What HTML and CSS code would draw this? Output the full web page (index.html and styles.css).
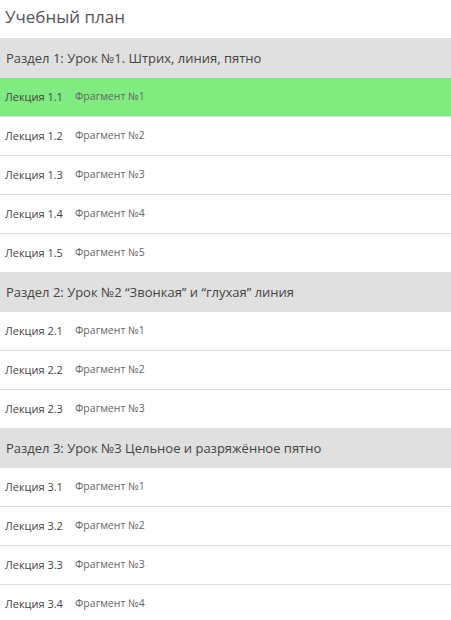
FILE: index.html
```html
<!DOCTYPE html>
<html lang="ru">
<head>
    <meta charset="UTF-8">
    <title>Учебный план</title>
    <link rel="stylesheet" href="styles.css">
</head>
<body>
    <div class="plan">
        <h2 class="plan-title">Учебный план</h2>

        <div class="section-head">Раздел 1: Урок №1. Штрих, линия, пятно</div>
        <ul class="lessons">
            <li class="lesson active"><span class="lesson-name">Лекция 1.1</span><span class="lesson-part">Фрагмент №1</span></li>
            <li class="lesson"><span class="lesson-name">Лекция 1.2</span><span class="lesson-part">Фрагмент №2</span></li>
            <li class="lesson"><span class="lesson-name">Лекция 1.3</span><span class="lesson-part">Фрагмент №3</span></li>
            <li class="lesson"><span class="lesson-name">Лекция 1.4</span><span class="lesson-part">Фрагмент №4</span></li>
            <li class="lesson"><span class="lesson-name">Лекция 1.5</span><span class="lesson-part">Фрагмент №5</span></li>
        </ul>

        <div class="section-head">Раздел 2: Урок №2 “Звонкая” и “глухая” линия</div>
        <ul class="lessons">
            <li class="lesson"><span class="lesson-name">Лекция 2.1</span><span class="lesson-part">Фрагмент №1</span></li>
            <li class="lesson"><span class="lesson-name">Лекция 2.2</span><span class="lesson-part">Фрагмент №2</span></li>
            <li class="lesson"><span class="lesson-name">Лекция 2.3</span><span class="lesson-part">Фрагмент №3</span></li>
        </ul>

        <div class="section-head">Раздел 3: Урок №3 Цельное и разряжённое пятно</div>
        <ul class="lessons">
            <li class="lesson"><span class="lesson-name">Лекция 3.1</span><span class="lesson-part">Фрагмент №1</span></li>
            <li class="lesson"><span class="lesson-name">Лекция 3.2</span><span class="lesson-part">Фрагмент №2</span></li>
            <li class="lesson"><span class="lesson-name">Лекция 3.3</span><span class="lesson-part">Фрагмент №3</span></li>
            <li class="lesson"><span class="lesson-name">Лекция 3.4</span><span class="lesson-part">Фрагмент №4</span></li>
        </ul>
    </div>
</body>
</html>
```

FILE: styles.css
```css
body {
    margin: 0;
    padding: 0;
    background: #fff;
    font-family: "Open Sans", Arial, sans-serif;
    color: #333;
}

.plan {
    width: 451px;
}

.plan-title {
    margin: 0;
    height: 38px;
    padding: 5px 0 0 5px;
    box-sizing: border-box;
    font-size: 17px;
    font-weight: normal;
    color: #555;
}

.section-head {
    height: 40px;
    display: flex;
    align-items: center;
    padding-left: 6px;
    background: #e0e0e0;
    font-size: 13px;
    color: #444;
}

.lessons {
    list-style: none;
    margin: 0;
    padding: 0;
}

.lesson {
    height: 38px;
    box-sizing: content-box;
    display: flex;
    align-items: center;
    padding: 0 0 0 5px;
    border-bottom: 1px solid #ddd;
}

.lesson:last-child {
    border-bottom: none;
}

.lesson.active {
    background: #80eb80;
}

.lesson-name {
    width: 70px;
    font-size: 11px;
    color: #444;
    margin-top: -2px;
}

.lesson-part {
    font-size: 10.5px;
    color: #666;
    margin-top: -2px;
}
```
